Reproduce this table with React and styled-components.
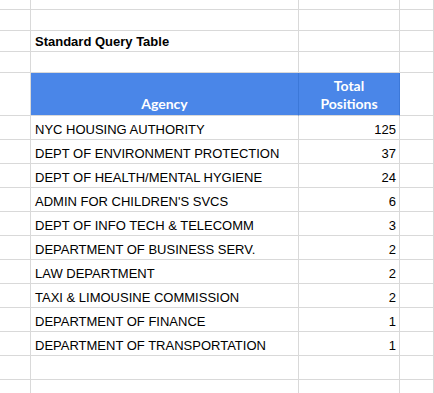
import React from "react";
import styled, { createGlobalStyle } from "styled-components";

const GlobalStyle = createGlobalStyle`
  html, body {
    margin: 0;
    padding: 0;
    background: #ffffff;
    overflow: hidden;
  }
`;

const Sheet = styled.div`
  display: grid;
  grid-template-columns: 31px 268px 101px 1fr;
  grid-template-rows: 10px 21px 21px 21px 43px repeat(12, 24px);
  width: 434px;
  height: 393px;
  overflow: hidden;
  font-family: "Liberation Sans", Arial, sans-serif;
  font-size: 13px;
  color: #000000;
`;

const Cell = styled.div`
  box-sizing: border-box;
  border-right: 1px solid #d9d9d9;
  border-bottom: 1px solid #d9d9d9;
  display: flex;
  align-items: flex-end;
  justify-content: ${(p) => (p.$right ? "flex-end" : "flex-start")};
  padding: 0 3px 2px 4px;
  white-space: nowrap;
  overflow: hidden;
  font-weight: ${(p) => (p.$bold ? 700 : 400)};
`;

const HeadCell = styled.div`
  box-sizing: border-box;
  background: #4a86e8;
  border-right: 1px solid #3c78d8;
  border-bottom: 1px solid #d9d9d9;
  display: flex;
  align-items: flex-end;
  justify-content: center;
  text-align: center;
  padding-bottom: 2px;
  font-family: Lato, "Open Sans", sans-serif;
  font-weight: 700;
  font-size: 14px;
  line-height: 18px;
  color: #ffffff;
`;

const rows = [
  ["NYC HOUSING AUTHORITY", 125],
  ["DEPT OF ENVIRONMENT PROTECTION", 37],
  ["DEPT OF HEALTH/MENTAL HYGIENE", 24],
  ["ADMIN FOR CHILDREN'S SVCS", 6],
  ["DEPT OF INFO TECH & TELECOMM", 3],
  ["DEPARTMENT OF BUSINESS SERV.", 2],
  ["LAW DEPARTMENT", 2],
  ["TAXI & LIMOUSINE COMMISSION", 2],
  ["DEPARTMENT OF FINANCE", 1],
  ["DEPARTMENT OF TRANSPORTATION", 1],
];

const EmptyRow = () => (
  <>
    <Cell />
    <Cell />
    <Cell />
    <Cell />
  </>
);

const App = () => {
  return (
    <>
      <GlobalStyle />
      <Sheet>
        <EmptyRow />
        <EmptyRow />
        <Cell />
        <Cell $bold>Standard Query Table</Cell>
        <Cell />
        <Cell />
        <EmptyRow />
        <Cell />
        <HeadCell>Agency</HeadCell>
        <HeadCell>
          Total
          <br />
          Positions
        </HeadCell>
        <Cell />
        {rows.map(([name, count]) => (
          <React.Fragment key={name}>
            <Cell />
            <Cell>{name}</Cell>
            <Cell $right>{count}</Cell>
            <Cell />
          </React.Fragment>
        ))}
        <EmptyRow />
        <EmptyRow />
      </Sheet>
    </>
  );
};

export default App;
